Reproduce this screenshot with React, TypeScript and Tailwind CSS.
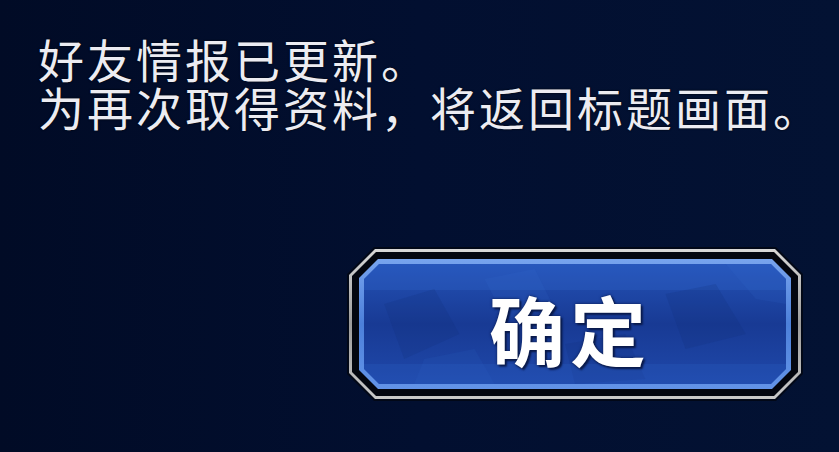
import React from 'react';

const ConfirmButton: React.FC = () => {
  return (
    <div className="w-[456px] h-[154px] p-[2px] bg-[#020817] [clip-path:polygon(27px_0,calc(100%-27px)_0,100%_27px,100%_calc(100%-27px),calc(100%-27px)_100%,27px_100%,0_calc(100%-27px),0_27px)]">
      <div className="w-full h-full p-[3px] bg-gradient-to-b from-[#d8d8d8] via-[#9c9c9c] to-[#c9c9c9] [clip-path:polygon(26px_0,calc(100%-26px)_0,100%_26px,100%_calc(100%-26px),calc(100%-26px)_100%,26px_100%,0_calc(100%-26px),0_26px)]">
        <div className="w-full h-full p-[7px] bg-[#03060f] [clip-path:polygon(24px_0,calc(100%-24px)_0,100%_24px,100%_calc(100%-24px),calc(100%-24px)_100%,24px_100%,0_calc(100%-24px),0_24px)]">
          <div className="w-full h-full p-[5px] bg-gradient-to-b from-[#78a4ee] via-[#4c80da] to-[#6394e8] [clip-path:polygon(19px_0,calc(100%-19px)_0,100%_19px,100%_calc(100%-19px),calc(100%-19px)_100%,19px_100%,0_calc(100%-19px),0_19px)]">
            <div className="relative w-full h-full overflow-hidden flex items-center justify-center bg-gradient-to-b from-[#2452b6] via-[#183a94] to-[#1f48aa] [clip-path:polygon(15px_0,calc(100%-15px)_0,100%_15px,100%_calc(100%-15px),calc(100%-15px)_100%,15px_100%,0_calc(100%-15px),0_15px)]">
              {/* camo texture */}
              <svg className="absolute inset-0 w-full h-full" viewBox="0 0 420 120" preserveAspectRatio="none">
                <rect x="0" y="0" width="420" height="26" fill="#3268cc" opacity="0.3" />
                <polygon points="20,40 70,25 95,70 40,95" fill="#0f2a74" opacity="0.18" />
                <polygon points="120,15 170,5 190,45 140,55" fill="#3c74d8" opacity="0.12" />
                <polygon points="300,30 350,20 380,70 320,85" fill="#0f2a74" opacity="0.18" />
                <polygon points="360,0 420,0 420,40 390,35" fill="#3c74d8" opacity="0.12" />
                <polygon points="200,80 260,70 280,115 210,120" fill="#0f2a74" opacity="0.15" />
                <polygon points="60,95 110,85 130,120 50,120" fill="#3268cc" opacity="0.12" />
                <rect x="0" y="100" width="420" height="20" fill="#2d5ec4" opacity="0.25" />
              </svg>
              <span className="relative text-white font-bold text-[76px] leading-none tracking-[5px] -ml-[10px] mt-[8px] [text-shadow:0_0_3px_#0a1a4a,2px_2px_2px_#0a1a4a]">
                确定
              </span>
            </div>
          </div>
        </div>
      </div>
    </div>
  );
};

export default function App() {
  return (
    <div className="w-[839px] h-[452px] bg-gradient-to-r from-[#010b26] via-[#020f30] to-[#031233] flex flex-col overflow-hidden font-['Noto_Sans_CJK_SC','Noto_Sans',sans-serif]">
      <p className="pl-[38px] pt-[34px] text-[46px] leading-[48px] tracking-[3px] text-[#ececf2] [text-shadow:0_0_2px_#000]">
        好友情报已更新。
        <br />
        为再次取得资料，将返回标题画面。
      </p>
      <div className="flex justify-end pr-[36px] mt-auto mb-[51px]">
        <ConfirmButton />
      </div>
    </div>
  );
}
